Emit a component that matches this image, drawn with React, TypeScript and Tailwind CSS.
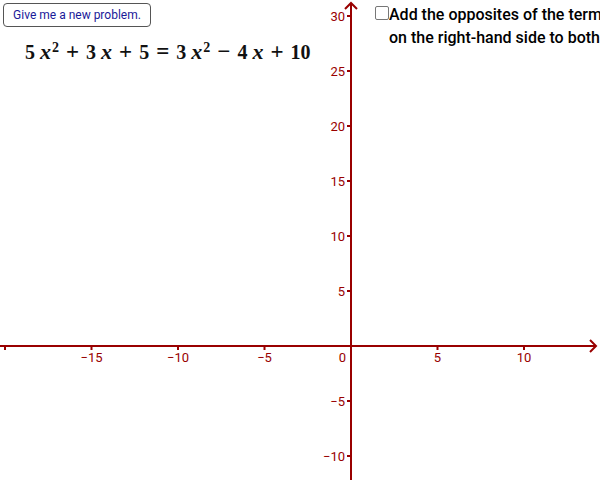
const AXIS = '#990000'

// graph scale: origin at (351, 346), 17.3px per x unit, 11px per y unit
const OX = 351
const OY = 346
const SX = 17.3
const SY = 11

const xTicks = [-20, -15, -10, -5, 5, 10]
const yTicks = [-10, -5, 5, 10, 15, 20, 25, 30]

function fmt(n: number) {
  return n < 0 ? `\u2212${Math.abs(n)}` : `${n}`
}

function Graph() {
  return (
    <svg width={600} height={480} className="absolute inset-0" style={{ fontFamily: 'Roboto, sans-serif' }}>
      <line x1={0} y1={OY} x2={596} y2={OY} stroke={AXIS} strokeWidth={2} />
      <polyline points={`590,${OY - 6} 596,${OY} 590,${OY + 6}`} fill="none" stroke={AXIS} strokeWidth={2} />
      <line x1={OX} y1={480} x2={OX} y2={3} stroke={AXIS} strokeWidth={2} />
      <polyline points={`${OX - 6},9 ${OX},3 ${OX + 6},9`} fill="none" stroke={AXIS} strokeWidth={2} />

      {xTicks.map((v) => {
        const x = OX + v * SX
        return (
          <g key={v}>
            <line x1={x} y1={OY} x2={x} y2={OY + 4} stroke={AXIS} strokeWidth={2} />
            {v !== -20 ? (
              <text x={x} y={OY + 16} textAnchor="middle" fontSize={13} fill={AXIS}>
                {fmt(v)}
              </text>
            ) : null}
          </g>
        )
      })}
      <text x={OX - 5} y={OY + 16} textAnchor="end" fontSize={13} fill={AXIS}>
        0
      </text>

      {yTicks.map((v) => {
        const y = OY - v * SY
        return (
          <g key={v}>
            <line x1={OX - 4} y1={y} x2={OX} y2={y} stroke={AXIS} strokeWidth={2} />
            <text x={OX - 6} y={y + 4.5} textAnchor="end" fontSize={13} fill={AXIS}>
              {fmt(v)}
            </text>
          </g>
        )
      })}
    </svg>
  )
}

function X({ sq }: { sq?: boolean }) {
  return (
    <span className="ml-[5px]">
      <i className="text-[22px]">x</i>
      {sq ? <sup className="ml-[1px] text-[14px]">2</sup> : null}
    </span>
  )
}

function Op({ c }: { c: string }) {
  return <span className="mx-[7px] text-[23px] font-bold">{c}</span>
}

export default function App() {
  return (
    <div className="relative h-[480px] w-[600px] overflow-hidden bg-white">
      <Graph />

      <button
        type="button"
        className="absolute left-[3px] top-[3px] flex h-[24px] w-[148px] items-center justify-center rounded-[4px] border border-[#555] bg-white text-[12px] text-[#1a1a99]"
        style={{ fontFamily: 'Roboto, sans-serif' }}
      >
        Give me a new problem.
      </button>

      <div
        className="absolute left-[25px] top-[40px] flex items-baseline whitespace-nowrap text-[20px] font-bold leading-none text-[#111]"
        style={{ fontFamily: '"Liberation Serif", serif' }}
      >
        <span>5</span>
        <X sq />
        <Op c="+" />
        <span>3</span>
        <X />
        <Op c="+" />
        <span>5</span>
        <Op c="=" />
        <span>3</span>
        <X sq />
        <Op c="−" />
        <span>4</span>
        <X />
        <Op c="+" />
        <span>10</span>
      </div>

      <div
        className="absolute left-[375px] top-[3px] flex whitespace-nowrap text-[16px] font-medium leading-[23px] text-black"
        style={{ fontFamily: 'Roboto, sans-serif' }}
      >
        <span className="mt-[3px] h-[14px] w-[14px] shrink-0 rounded-[2px] border border-[#777] bg-white" />
        <div>
          <div>Add the opposites of the terms</div>
          <div>on the right-hand side to both sides</div>
        </div>
      </div>
    </div>
  )
}
